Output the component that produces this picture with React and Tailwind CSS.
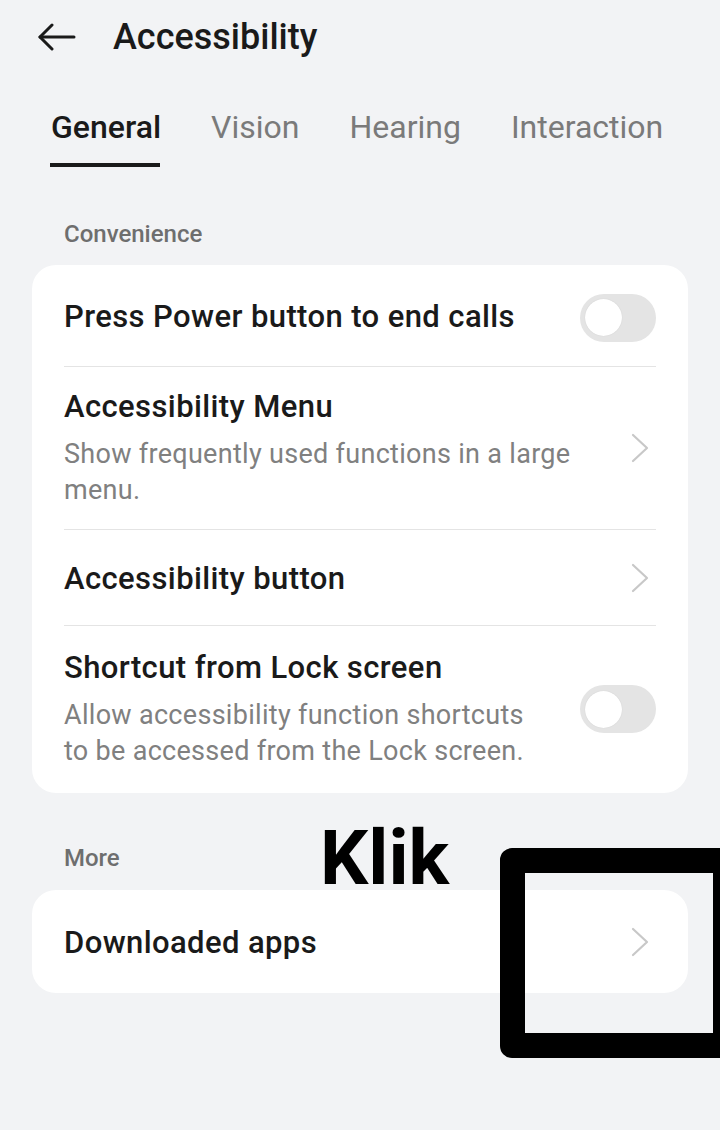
import React from "react";

const ChevronRight = () => (
  <svg width="18" height="30" viewBox="0 0 18 30" fill="none" stroke="#c8c8c8" strokeWidth="2.2" strokeLinecap="round" strokeLinejoin="round">
    <path d="M2 2l14 13l-14 13" />
  </svg>
);

const BackArrow = () => (
  <svg width="38" height="28" viewBox="0 0 38 28" fill="none" stroke="#1a1a1a" strokeWidth="3" strokeLinecap="round" strokeLinejoin="round">
    <path d="M2 14h34" />
    <path d="M14 2L2 14l12 12" />
  </svg>
);

const Toggle = () => (
  <div className="w-[76px] h-[48px] rounded-full bg-[#e4e4e4] flex items-center px-[5px] shrink-0">
    <div className="w-[37px] h-[37px] rounded-full bg-white shadow-[0_0_1px_rgba(0,0,0,0.15)]" />
  </div>
);

const Divider = () => <div className="mx-8 h-px bg-[#e4e4e4]" />;

export default function App() {
  return (
    <div className="relative w-[720px] h-[1130px] overflow-hidden bg-[#f2f3f5] text-[#1a1a1a]" style={{ fontFamily: "Roboto, 'Noto Sans', sans-serif" }}>
      {/* Header */}
      <div className="flex items-center h-[74px] pl-[38px]">
        <BackArrow />
        <h1 className="ml-[37px] text-[36px] font-medium">Accessibility</h1>
      </div>

      {/* Tabs */}
      <div className="flex items-start pl-[51px] pt-[34px] gap-[50px] text-[32px]">
        <div className="flex flex-col items-start">
          <span className="font-medium text-[#1a1a1a] leading-[38px]">General</span>
          <div className="mt-[17px] -ml-[1px] w-[110px] h-[4px] bg-[#1a1a1a]" />
        </div>
        <span className="text-[#7a7a7a] leading-[38px]">Vision</span>
        <span className="text-[#7a7a7a] leading-[38px]">Hearing</span>
        <span className="text-[#7a7a7a] leading-[38px]">Interaction</span>
      </div>

      {/* Convenience */}
      <div className="px-[64px] pt-[52px] pb-[16px] text-[24px] font-medium text-[#6e6e6e] leading-[30px]">Convenience</div>
      <div className="mx-8 bg-white rounded-[24px]">
        <div className="flex items-center justify-between h-[101px] px-8 pt-[4px]">
          <span className="text-[31px] font-medium tracking-[0.4px]">Press Power button to end calls</span>
          <Toggle />
        </div>
        <Divider />
        <div className="flex items-center justify-between h-[162px] px-8">
          <div className="w-[535px]">
            <div className="text-[31px] font-medium tracking-[0.4px] leading-[38px]">Accessibility Menu</div>
            <div className="mt-[10px] text-[27px] tracking-[0.3px] leading-[36px] text-[#808080]">Show frequently used functions in a large menu.</div>
          </div>
          <div className="mr-[7px]"><ChevronRight /></div>
        </div>
        <Divider />
        <div className="flex items-center justify-between h-[95px] px-8">
          <span className="text-[31px] font-medium tracking-[0.4px] pt-[3px]">Accessibility button</span>
          <div className="mr-[7px]"><ChevronRight /></div>
        </div>
        <Divider />
        <div className="flex items-center justify-between h-[167px] px-8 pb-[1px]">
          <div className="w-[480px]">
            <div className="text-[31px] font-medium tracking-[0.4px] leading-[38px]">Shortcut from Lock screen</div>
            <div className="mt-[10px] text-[27px] tracking-[0.3px] leading-[36px] text-[#808080]">Allow accessibility function shortcuts to be accessed from the Lock screen.</div>
          </div>
          <Toggle />
        </div>
      </div>

      {/* More */}
      <div className="px-[64px] pt-[50px] pb-[17px] text-[24px] font-medium text-[#6e6e6e] leading-[30px]">More</div>
      <div className="mx-8 bg-white rounded-[24px]">
        <div className="flex items-center justify-between h-[103px] px-8">
          <span className="text-[31px] font-medium tracking-[0.4px] pt-[3px]">Downloaded apps</span>
          <div className="mr-[7px]"><ChevronRight /></div>
        </div>
      </div>

      {/* Annotation */}
      <div className="absolute left-[320px] top-[820px] text-[76px] font-bold text-black leading-none">Klik</div>
      <div className="absolute left-[500px] top-[848px] w-[238px] h-[210px] border-[25px] border-black rounded-[12px]" />
    </div>
  );
}
